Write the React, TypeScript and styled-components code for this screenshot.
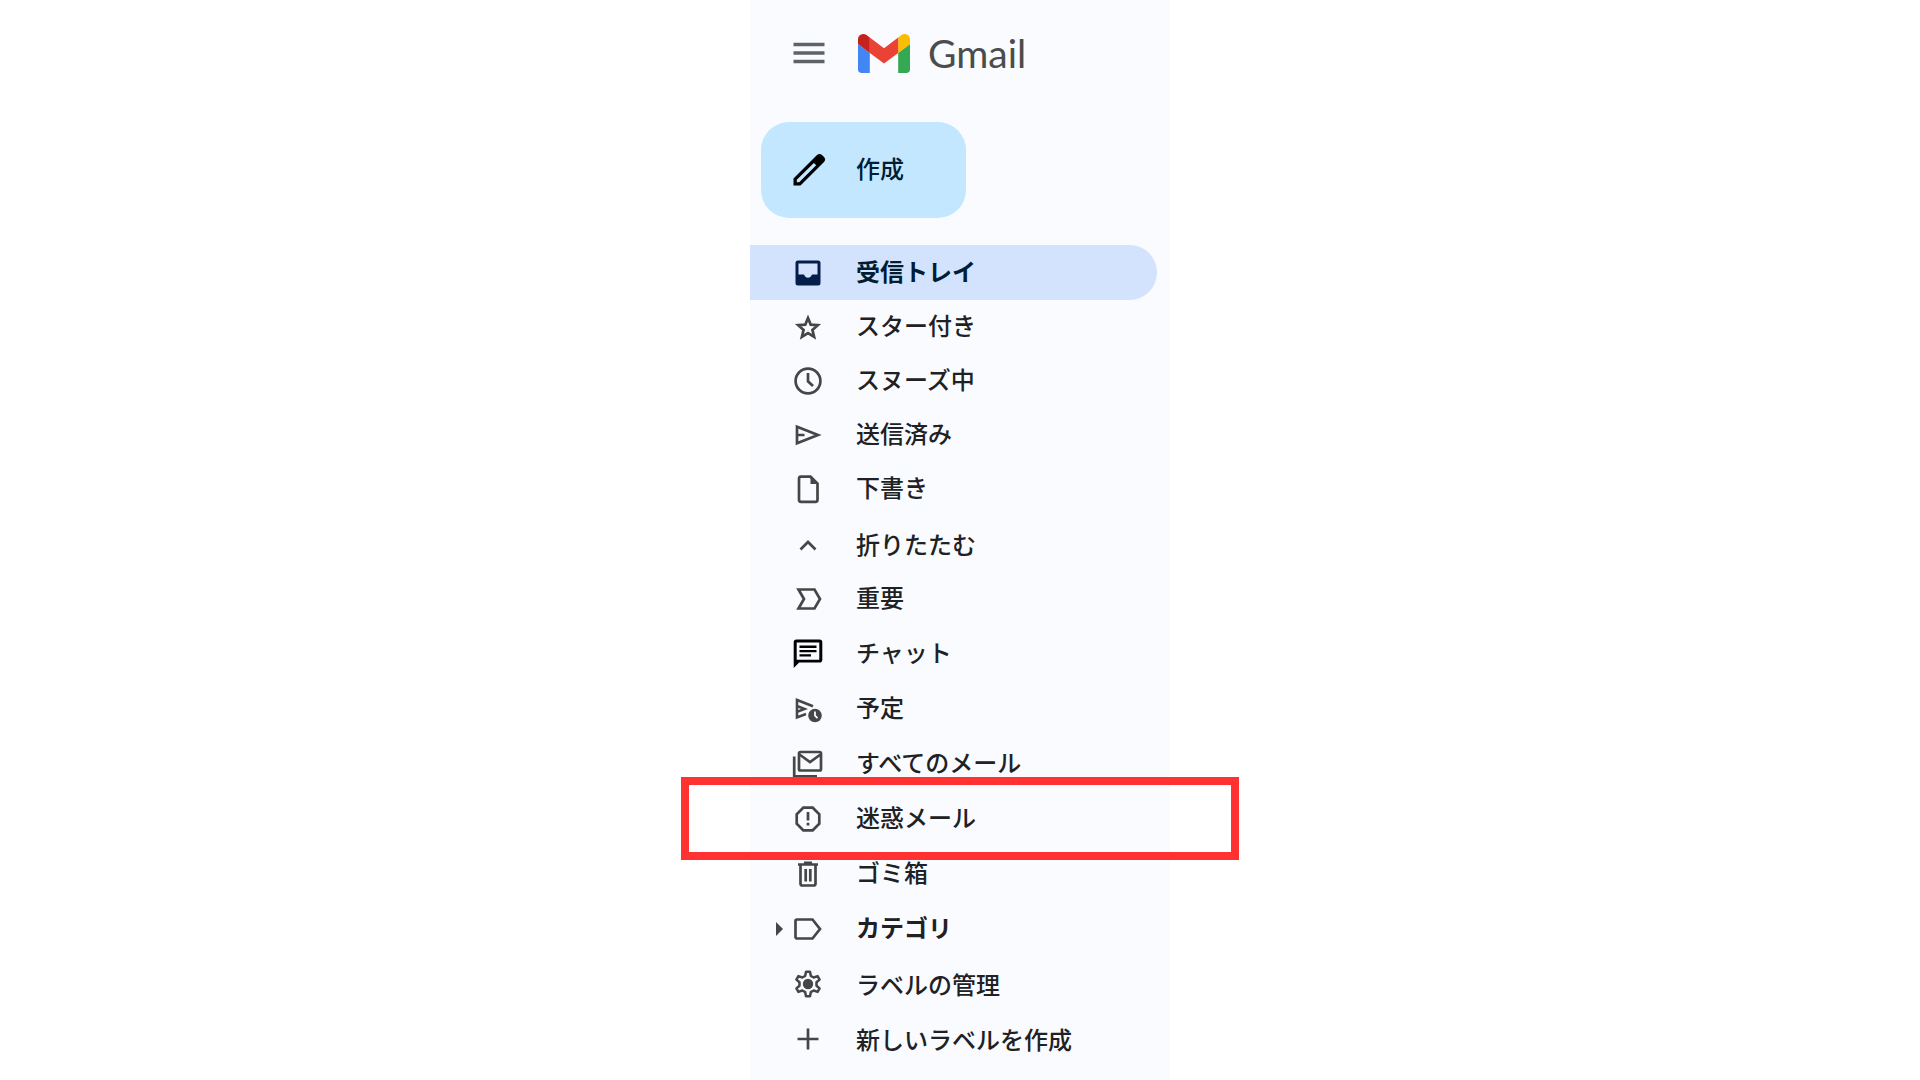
import React from "react";
import styled, { createGlobalStyle, css } from "styled-components";

const Global = createGlobalStyle`
  *, *::before, *::after { box-sizing: border-box; }
  body { margin: 0; background: #fff; }
  button { font: inherit; color: inherit; border: 0; padding: 0; background: none; cursor: pointer; }
`;

const Page = styled.div`
  display: flex;
  justify-content: center;
  min-height: 100vh;
  overflow: hidden;
  font-family: "Noto Sans CJK JP", sans-serif;
  color: #202124;
`;

const Sidebar = styled.aside`
  width: 420px;
  max-width: 100%;
  background: #f9fbff;
`;

const Header = styled.header`
  display: flex;
  align-items: center;
  gap: 31px;
  padding: 23px 41px 0;
`;

const MenuButton = styled.button`
  display: flex;
  justify-content: center;
  width: 36px;
`;

const Brand = styled.a`
  display: flex;
  align-items: center;
  gap: 18px;
  color: #4a4d4c;
  text-decoration: none;
`;

const Wordmark = styled.span`
  font-family: Lato, sans-serif;
  font-size: 39px;
  line-height: 60px;
`;

const Compose = styled.button`
  display: flex;
  align-items: center;
  gap: 30px;
  width: 205px;
  height: 96px;
  margin: 39px 0 27px 11px;
  padding-left: 31px;
  border-radius: 28px;
  background: #c2e7ff;
`;

const Label = styled.span<{ $raised?: boolean }>`
  font-size: 24px;
  line-height: 36px;
  padding-bottom: ${(p) => (p.$raised ? "4px" : "0")};
`;

const ComposeLabel = styled(Label)`
  font-weight: 500;
  color: #001d35;
`;

const List = styled.ul`
  list-style: none;
  margin: 0;
  padding: 0;
`;

const Item = styled.li`
  position: relative;
`;

const rowStyle = css<{ $tall?: boolean }>`
  display: flex;
  align-items: center;
  gap: 30px;
  width: 100%;
  height: ${(p) => (p.$tall ? "55px" : "54px")};
  padding-left: 40px;
  text-align: left;
  text-decoration: none;
`;

const Row = styled.a<{ $tall?: boolean; $active?: boolean; $bold?: boolean }>`
  ${rowStyle}
  color: ${(p) => (p.$active ? "#001d35" : "#202124")};
  font-weight: ${(p) => (p.$active || p.$bold ? 700 : 500)};
  ${(p) =>
    p.$active &&
    css`
      width: calc(100% - 13px);
      background: #d3e3fd;
      border-radius: 0 28px 28px 0;
    `}
`;

const RowButton = styled.button<{ $tall?: boolean }>`
  ${rowStyle}
  font-weight: 500;
`;

const IconBox = styled.span`
  position: relative;
  display: flex;
  justify-content: center;
  flex: none;
  width: 36px;
  color: #444746;
`;

const Caret = styled.span`
  position: absolute;
  left: -14px;
  top: 10px;
  border-left: 7px solid #444746;
  border-top: 7px solid transparent;
  border-bottom: 7px solid transparent;
`;

const Highlight = styled.span`
  position: absolute;
  inset: -14px -69px;
  border: 8px solid #ff3131;
  pointer-events: none;
`;

const Svg = ({ children }: { children: React.ReactNode }) => (
  <svg width="34" height="34" viewBox="0 0 34 34" fill="none" stroke="currentColor" strokeWidth="2.7" aria-hidden="true">
    {children}
  </svg>
);

const icons: Record<string, React.ReactNode> = {
  inbox: (
    <Svg>
      <path fill="#041e49" stroke="none" fillRule="evenodd" d="M7 4.5h20a2.5 2.5 0 0 1 2.5 2.5v20a2.5 2.5 0 0 1-2.5 2.5H7A2.5 2.5 0 0 1 4.5 27V7A2.5 2.5 0 0 1 7 4.5zM7.5 7.5v11h5.500c1 2.200 2.200 3.300 4 3.300s3-1.100 4-3.300h5.500v-11z" />
    </Svg>
  ),
  star: (
    <Svg>
      <path d="M17 8l2.700 6.600 7.100.6-5.400 4.700 1.700 7-6.100-3.800-6.100 3.800 1.700-7-5.400-4.700 7.100-.6z" />
    </Svg>
  ),
  clock: (
    <Svg>
      <circle cx="17" cy="17" r="12.400" />
      <path d="M17 9v8.300l5 4.700" />
    </Svg>
  ),
  send: (
    <Svg>
      <path d="M6 8.700v16.600L27 17zM6 17h7.500" />
    </Svg>
  ),
  draft: (
    <Svg>
      <path d="M19.500 4.700H10a2 2 0 0 0-2 2v21.100a2 2 0 0 0 2 2h14.500a2 2 0 0 0 2-2V11.500z" />
      <path d="M19.500 4.700v7.300h7z" fill="currentColor" stroke="none" />
    </Svg>
  ),
  up: (
    <Svg>
      <path d="M9.500 22.500l7.500-7.500 7.500 7.500" />
    </Svg>
  ),
  important: (
    <Svg>
      <path d="M7.500 7.500h16L29 17l-5.500 9.500h-16L13 17z" />
    </Svg>
  ),
  chat: (
    <Svg>
      <path fill="#000" stroke="none" fillRule="evenodd" d="M5.500 2.500h23a2.800 2.800 0 0 1 2.800 2.800v17.500a2.800 2.800 0 0 1-2.800 2.800H8.200L2.700 31V5.300A2.800 2.800 0 0 1 5.500 2.500zM5.700 5.500v17.200h22.600v-17.200z" />
      <path stroke="#000" strokeWidth="2.400" d="M8.500 9.800h17M8.500 14.100h17M8.500 18.400h11.500" />
    </Svg>
  ),
  scheduled: (
    <Svg>
      <path d="M22 14.200L6 8v17.400l9-3.400M6 14l7.500 2.900L6 19.900" strokeWidth="2.600" />
      <circle cx="24" cy="23.500" r="6.800" fill="currentColor" stroke="none" />
      <path d="M24 19.500v4.200l2.500 2.500" stroke="#f9fbff" strokeWidth="1.800" />
    </Svg>
  ),
  all: (
    <Svg>
      <path d="M3.200 9.500v19.800H26" />
      <rect x="8" y="5" width="22" height="18.500" rx="1.500" />
      <path d="M8.500 7.500l10.500 7.500L29.500 7.500" />
    </Svg>
  ),
  spam: (
    <Svg>
      <path d="M12.300 5.700h9.400l6.600 6.600v9.400l-6.600 6.600h-9.400l-6.600-6.600v-9.400z" />
      <path d="M17 10v8.500M17 20.800v2.700" />
    </Svg>
  ),
  trash: (
    <Svg>
      <path d="M7 7.500h20M13 5.800h8M9.500 8v18.500a2 2 0 0 0 2 2h11a2 2 0 0 0 2-2V8M14.700 12v12.500M19.300 12v12.500" />
    </Svg>
  ),
  label: (
    <Svg>
      <path d="M6 7.500h15.500L29 17l-7.500 9.500H6a1.500 1.500 0 0 1-1.500-1.500V9A1.500 1.500 0 0 1 6 7.500z" />
    </Svg>
  ),
  gear: (
    <Svg>
      <path strokeWidth="2.500" strokeLinejoin="round" d="M15 4.700h4l.8 4.100 2.900 1.700 3.900-1.400 2 3.500-3.100 2.700v3.400l3.100 2.700-2 3.500-3.900-1.400-2.900 1.700-.8 4.100h-4l-.8-4.100-2.900-1.700-3.900 1.400-2-3.500 3.100-2.700v-3.400L5.400 12.600l2-3.500 3.900 1.400 2.900-1.700z" />
      <circle cx="17" cy="17" r="5.200" fill="currentColor" stroke="none" />
    </Svg>
  ),
  plus: (
    <Svg>
      <path d="M17 6.500v21M6.500 17h21" />
    </Svg>
  ),
};

const primary = [
  { icon: "inbox", label: "受信トレイ" },
  { icon: "star", label: "スター付き" },
  { icon: "clock", label: "スヌーズ中" },
  { icon: "send", label: "送信済み" },
  { icon: "draft", label: "下書き" },
];

const more = [
  { icon: "important", label: "重要" },
  { icon: "chat", label: "チャット" },
  { icon: "scheduled", label: "予定" },
  { icon: "all", label: "すべてのメール" },
  { icon: "spam", label: "迷惑メール" },
  { icon: "trash", label: "ゴミ箱" },
];

export default function App() {
  return (
    <Page>
      <Global />
      <Sidebar>
        <Header>
          <MenuButton aria-label="メインメニュー">
            <svg width="32" height="24" viewBox="0 0 32 24" stroke="#5f6368" strokeWidth="3.400" aria-hidden="true">
              <path d="M.5 3.500h31M.5 12h31M.5 20.500h31" />
            </svg>
          </MenuButton>
          <Brand href="#">
            <svg width="52" height="39" viewBox="52 42 88 66" aria-hidden="true">
              <path fill="#4285f4" d="M58 108h14V74L52 59v43c0 3.320 2.690 6 6 6" />
              <path fill="#34a853" d="M120 108h14c3.320 0 6-2.690 6-6V59l-20 15" />
              <path fill="#fbbc04" d="M120 48v26l20-15v-8c0-7.420-8.470-11.650-14.400-7.200" />
              <path fill="#ea4335" d="M72 74V48l24 18 24-18v26L96 92" />
              <path fill="#c5221f" d="M52 51v8l20 15V48l-5.600-4.200c-5.940-4.450-14.400-.22-14.400 7.200" />
            </svg>
            <Wordmark>Gmail</Wordmark>
          </Brand>
        </Header>
        <Compose>
          <svg width="34" height="34" viewBox="0 0 34 34" aria-hidden="true">
            <path fillRule="evenodd" d="M1.500 32.500v-7L25 2c1.500-1.500 3.500-1.500 5 0l2 2c1.500 1.500 1.500 3.500 0 5L8.500 32.500zM4.800 29.200h2.400L24.200 12.300 21.800 9.900 4.800 26.800z" />
          </svg>
          <ComposeLabel $raised>作成</ComposeLabel>
        </Compose>
        <nav>
          <List>
            {primary.map((r, i) => (
              <Item key={r.icon}>
                <Row href="#" $tall={i === 0} $active={i === 0}>
                  <IconBox>{icons[r.icon]}</IconBox>
                  <Label $raised>{r.label}</Label>
                </Row>
              </Item>
            ))}
          </List>
          <RowButton $tall aria-expanded="true">
            <IconBox>{icons.up}</IconBox>
            <Label>折りたたむ</Label>
          </RowButton>
          <List>
            {more.map((r) => (
              <Item key={r.icon}>
                <Row href="#" $tall>
                  <IconBox>{icons[r.icon]}</IconBox>
                  <Label $raised>{r.label}</Label>
                </Row>
                {r.icon === "spam" && <Highlight />}
              </Item>
            ))}
          </List>
          <List>
            <Item>
              <Row href="#" $tall $bold>
                <IconBox>
                  <Caret />
                  {icons.label}
                </IconBox>
                <Label $raised>カテゴリ</Label>
              </Row>
            </Item>
            <Item>
              <Row href="#" $tall>
                <IconBox>{icons.gear}</IconBox>
                <Label>ラベルの管理</Label>
              </Row>
            </Item>
            <Item>
              <RowButton $tall>
                <IconBox>{icons.plus}</IconBox>
                <Label>新しいラベルを作成</Label>
              </RowButton>
            </Item>
          </List>
        </nav>
      </Sidebar>
    </Page>
  );
}
